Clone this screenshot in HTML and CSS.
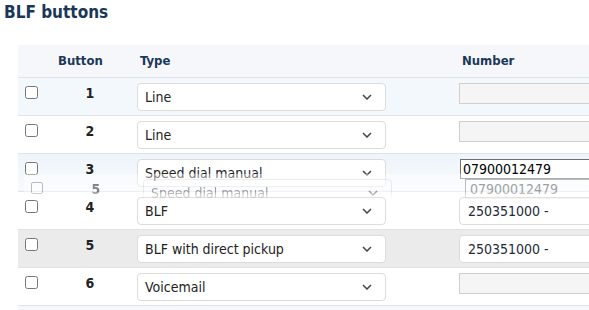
FILE: index.html
```html
<!DOCTYPE html>
<html lang="en">
<head>
    <meta charset="UTF-8">
    <title>BLF buttons</title>
    <link rel="stylesheet" href="styles.css">
</head>
<body>
    <h1 class="title">BLF buttons</h1>

    <div class="blf-wrap">
        <table class="blf-table">
            <colgroup>
                <col class="w-check">
                <col class="w-btn">
                <col class="w-type">
                <col class="w-num">
            </colgroup>
            <thead>
                <tr>
                    <th></th>
                    <th class="th-btn">Button</th>
                    <th>Type</th>
                    <th>Number</th>
                </tr>
            </thead>
            <tbody>
                <tr class="row-hover">
                    <td><input type="checkbox" class="chk"></td>
                    <td class="btn-no">1</td>
                    <td><div class="select"><span>Line</span><svg class="chev" viewBox="0 0 10 6"><path d="M1 1l4 4 4-4"/></svg></div></td>
                    <td><input type="text" class="num-input" disabled></td>
                </tr>
                <tr>
                    <td><input type="checkbox" class="chk"></td>
                    <td class="btn-no">2</td>
                    <td><div class="select"><span>Line</span><svg class="chev" viewBox="0 0 10 6"><path d="M1 1l4 4 4-4"/></svg></div></td>
                    <td><input type="text" class="num-input" disabled></td>
                </tr>
                <tr class="row-active">
                    <td><input type="checkbox" class="chk"></td>
                    <td class="btn-no">3</td>
                    <td><div class="select"><span>Speed dial manual</span><svg class="chev" viewBox="0 0 10 6"><path d="M1 1l4 4 4-4"/></svg></div></td>
                    <td><input type="text" class="num-input focused" value="07900012479"></td>
                </tr>
                <tr>
                    <td><input type="checkbox" class="chk"></td>
                    <td class="btn-no">4</td>
                    <td><div class="select"><span>BLF</span><svg class="chev" viewBox="0 0 10 6"><path d="M1 1l4 4 4-4"/></svg></div></td>
                    <td><div class="ext-pick">250351000 -</div></td>
                </tr>
                <tr class="row-drag">
                    <td><input type="checkbox" class="chk"></td>
                    <td class="btn-no">5</td>
                    <td><div class="select"><span>BLF with direct pickup</span><svg class="chev" viewBox="0 0 10 6"><path d="M1 1l4 4 4-4"/></svg></div></td>
                    <td><div class="ext-pick">250351000 -</div></td>
                </tr>
                <tr>
                    <td><input type="checkbox" class="chk"></td>
                    <td class="btn-no">6</td>
                    <td><div class="select"><span>Voicemail</span><svg class="chev" viewBox="0 0 10 6"><path d="M1 1l4 4 4-4"/></svg></div></td>
                    <td><input type="text" class="num-input" disabled></td>
                </tr>
                <tr class="row-foot">
                    <td colspan="4"></td>
                </tr>
            </tbody>
        </table>

        <!-- row being dragged -->
        <div class="drag-ghost">
            <div class="g-check"><span class="fake-chk"></span></div>
            <div class="g-btn">5</div>
            <div class="g-type"><div class="select"><span>Speed dial manual</span><svg class="chev" viewBox="0 0 10 6"><path d="M1 1l4 4 4-4"/></svg></div></div>
            <div class="g-num"><div class="g-input">07900012479</div></div>
        </div>
    </div>
</body>
</html>
```

FILE: styles.css
```css
:root {
    --navy: #1a3759;
    --line: #dfe3e8;
    --text: #222;
}

* {
    margin: 0;
    padding: 0;
    box-sizing: border-box;
    font-family: "DejaVu Sans Condensed", "DejaVu Sans", sans-serif;
}

html {
    overflow: hidden;
}

body {
    background: #fff;
    color: var(--text);
}

.title {
    font-size: 17px;
    line-height: 20px;
    padding: 2px 0 0 4px;
    color: var(--navy);
    font-weight: bold;
}

.blf-wrap {
    position: relative;
    margin: 23px 0 0 18px;
    width: 640px;
}

.blf-table {
    width: 640px;
    table-layout: fixed;
    border-collapse: collapse;
}

.w-check { width: 28px; }
.w-btn { width: 88px; }
.w-type { width: 322px; }
.w-num { width: 202px; }

.blf-table th {
    height: 32px;
    background: #f6f7fa;
    border-bottom: 1px solid var(--line);
    color: var(--navy);
    font-size: 13px;
    font-weight: bold;
    text-align: left;
    padding: 0 6px;
    vertical-align: middle;
}

.blf-table th.th-btn {
    padding-left: 12px;
}

.blf-table td {
    padding: 5px 3px 4px;
    border-bottom: 1px solid var(--line);
    vertical-align: top;
    font-size: 14px;
}

.row-hover td {
    background: #f3f8fd;
}

.row-active td {
    background: linear-gradient(#eef4fb, #f7fafd);
}

.row-drag td {
    background: #ebebeb;
}

.row-foot td {
    height: 12px;
    padding: 0;
    background: #f6f7fa;
    border-bottom: none;
}

.chk {
    display: block;
    width: 13px;
    height: 13px;
    margin: 3px 0 0 4px;
}

.btn-no {
    text-align: center;
    font-weight: bold;
    line-height: 20px;
}

.select {
    width: 249px;
    height: 28px;
    border: 1px solid #dcdcdc;
    border-radius: 4px;
    background: #fff;
    display: flex;
    align-items: center;
    justify-content: space-between;
    padding: 0 13px 0 7px;
    color: var(--text);
    font-size: 14px;
}

.chev {
    width: 10px;
    height: 6px;
    fill: none;
    stroke: #444;
    stroke-width: 1.5;
}

.num-input {
    display: block;
    width: 190px;
    height: 21px;
    border: 1px solid #cfcfcf;
    background: #f5f5f5;
    font-size: 14px;
    padding: 0 2px;
    color: #000;
}

.num-input.focused {
    background: #fff;
    border-color: #707070;
    outline: none;
    height: 20px;
    margin-left: 1px;
}

.ext-pick {
    width: 190px;
    height: 28px;
    border: 1px solid #dcdcdc;
    border-radius: 4px;
    background: #fff;
    padding: 0 8px;
    line-height: 26px;
    font-size: 14px;
    color: #1e2b3a;
}

.drag-ghost {
    position: absolute;
    left: 6px;
    top: 129px;
    width: 640px;
    height: 26px;
    display: flex;
    overflow: hidden;
    background: linear-gradient(rgba(255, 255, 255, 0.75), rgba(255, 255, 255, 0.9));
    -webkit-mask-image: linear-gradient(#000 65%, transparent);
    mask-image: linear-gradient(#000 65%, transparent);
    opacity: 0.55;
}

.drag-ghost > div {
    padding: 5px 3px 0;
    font-size: 14px;
}

.g-check { width: 28px; }
.g-btn { width: 88px; text-align: center; font-weight: bold; line-height: 20px; }
.g-type { width: 322px; }
.g-num { width: 202px; }

.fake-chk {
    display: block;
    width: 12px;
    height: 12px;
    margin: 3px 0 0 4px;
    border: 1px solid #888;
    border-radius: 2px;
    background: #fff;
}

.drag-ghost .select span {
    color: #555;
}

.g-input {
    width: 190px;
    height: 20px;
    border: 1px solid #888;
    background: #fff;
    padding: 0 4px;
    line-height: 18px;
    color: #555;
}
```
